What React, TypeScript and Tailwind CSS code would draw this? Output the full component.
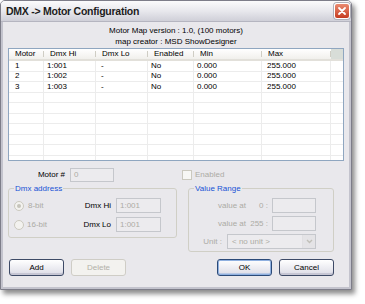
import React from 'react';

const cols = [
  { name: 'Motor', w: 'w-[35px]', pad: 'pl-[6px]' },
  { name: 'Dmx Hi', w: 'w-[52px]', pad: 'pl-[3px]' },
  { name: 'Dmx Lo', w: 'w-[52px]', pad: 'pl-[5px]' },
  { name: 'Enabled', w: 'w-[46px]', pad: 'pl-[3px]' },
  { name: 'Min', w: 'w-[68px]', pad: 'pl-[3px]' },
  { name: 'Max', w: 'w-[69px]', pad: 'pl-[5px]' },
];

const rows = [
  ['1', '1:001', '-', 'No', '0.000', '255.000'],
  ['2', '1:002', '-', 'No', '0.000', '255.000'],
  ['3', '1:003', '-', 'No', '0.000', '255.000'],
  [], [], [], [], [], [], [],
];

function Field({ value = '', w }: { value?: string; w: string }) {
  return (
    <div className={`${w} h-[15px] shrink-0 border border-[#c5c7cc] bg-[#ecebee] flex items-center pl-[3px] text-[#acaba5]`}>
      {value}
    </div>
  );
}

function Btn({ label, kind = 'normal' }: { label: string; kind?: 'normal' | 'default' | 'disabled' }) {
  const cls =
    kind === 'disabled'
      ? 'border-[#cfcdc6] bg-[#f3f2ef] text-[#b2b0a8]'
      : kind === 'default'
      ? 'border-[#2b4a78] bg-gradient-to-b from-white to-[#dcdce6] shadow-[inset_0_0_0_1px_#8fb0e0,inset_0_-2px_0_#b8c8e4] text-black'
      : 'border-[#3d4a66] bg-gradient-to-b from-white to-[#dcdce6] shadow-[inset_0_-2px_0_#c6c6d4] text-black';
  return (
    <div className={`w-[55px] h-[17px] shrink-0 rounded-[3px] border flex items-center justify-center ${cls}`}>{label}</div>
  );
}

export default function App() {
  return (
    <div className="w-[365px] h-[304px] bg-white font-['Liberation_Sans',Arial,sans-serif] text-[8px] leading-none text-black">
      <div className="w-[352px] h-[290px] flex flex-col rounded-t-[5px] border border-[#7d7d89] shadow-[3px_4px_5px_rgba(0,0,0,0.45)] bg-[#e9e8ec] overflow-hidden">
        <div className="h-[21px] shrink-0 flex items-center justify-between pl-[5px] pr-[1px] bg-gradient-to-b from-[#fbfbfc] via-[#e8e8ed] to-[#cfcfd8] border-b border-[#b5b5c0]">
          <span className="text-[10.5px] font-bold tracking-[-0.25px] text-[#1c1c1c]">DMX -&gt; Motor Configuration</span>
          <div className="w-[16px] h-[16px] rounded-[3px] border border-white bg-gradient-to-b from-[#e98a70] to-[#c53a1d] flex items-center justify-center shadow-[0_0_0_1px_#b0b0b8]">
            <svg width="10" height="10" viewBox="0 0 10 10">
              <path d="M2 2 L8 8 M8 2 L2 8" stroke="white" strokeWidth="1.8" strokeLinecap="round" />
            </svg>
          </div>
        </div>

        <div className="flex-1 flex flex-col border-x-2 border-b-2 border-[#c3c3cd] px-[5px]">
          <div className="pt-[3px] text-center leading-[11px]">
            <div>Motor Map version : 1.0, (100 motors)</div>
            <div>map creator : MSD ShowDesigner</div>
          </div>

          <div className="mt-[1px] h-[113px] shrink-0 border border-[#8fa6c0] bg-white overflow-hidden">
            <div className="h-[12px] flex bg-gradient-to-b from-white to-[#f1f0ec] border-b-2 border-[#e2e0da]">
              {cols.map(c => (
                <div key={c.name} className={`${c.w} h-full flex items-center pl-[6px] relative`}>
                  {c.name}
                  <div className="absolute right-0 top-[2px] bottom-[2px] w-px bg-[#cfcdc4]" />
                </div>
              ))}
              <div className="flex-1 bg-[#d8ddd8]" />
            </div>
            {rows.map((r, i) => (
              <div key={i} className="h-[10.56px] flex border-b border-[#ececec]">
                {cols.map((c, j) => (
                  <div key={j} className={`${c.w} h-full flex items-center ${c.pad} border-r border-[#ececec]`}>
                    {r[j] || ''}
                  </div>
                ))}
                <div className="flex-1" />
              </div>
            ))}
          </div>

          <div className="mt-[7px] flex">
            <div className="w-[169px] flex flex-col">
              <div className="h-[14px] flex items-center">
                <div className="w-[57px] text-right">Motor #</div>
                <div className="ml-[5px] w-[44px] h-[14px] border border-[#c5c7cc] bg-[#ecebee] flex items-center pl-[3px] text-[#acaba5]">0</div>
              </div>
              <fieldset className="mt-[2px] h-[54px] rounded-[3px] border border-[#d0cfc6]">
                <legend className="ml-[5px] px-[1px] leading-[9px] text-[#1853d6]">Dmx address</legend>
                <div className="pt-[5px] flex flex-col gap-[4px] pr-[15px]">
                  <div className="h-[15px] flex items-center pl-[5px]">
                    <div className="w-[10px] h-[10px] rounded-full border border-[#cbc9bf] bg-[#f3f2ef] flex items-center justify-center">
                      <div className="w-[4px] h-[4px] rounded-full bg-[#c6c4bb]" />
                    </div>
                    <span className="ml-[4px] text-[#acaba5]">8-bit</span>
                    <span className="flex-1 text-right">Dmx Hi</span>
                    <div className="ml-[5px]"><Field w="w-[45px]" value="1:001" /></div>
                  </div>
                  <div className="h-[15px] flex items-center pl-[5px]">
                    <div className="w-[10px] h-[10px] rounded-full border border-[#cbc9bf] bg-[#f3f2ef]" />
                    <span className="ml-[3px] text-[#acaba5]">16-bit</span>
                    <span className="flex-1 text-right">Dmx Lo</span>
                    <div className="ml-[5px]"><Field w="w-[45px]" value="1:001" /></div>
                  </div>
                </div>
              </fieldset>
            </div>

            <div className="ml-[5px] flex flex-col">
              <div className="h-[14px] flex items-center">
                <div className="w-[10px] h-[10px] border border-[#cbc9bf] bg-[#f7f7f5]" />
                <span className="ml-[3px] text-[#acaba5]">Enabled</span>
              </div>
              <fieldset className="ml-[6px] mt-[2px] w-[146px] h-[68px] rounded-[3px] border border-[#d0cfc6]">
                <legend className="ml-[5px] px-[1px] leading-[9px] text-[#1853d6]">Value Range</legend>
                <div className="pt-[5px] flex flex-col gap-[3px] pr-[17px] text-[#acaba5]">
                  <div className="h-[15px] flex items-center justify-end">
                    <span>value at</span>
                    <span className="w-[22px] text-right">0 :</span>
                    <div className="ml-[4px]"><Field w="w-[44px]" /></div>
                  </div>
                  <div className="h-[15px] flex items-center justify-end">
                    <span>value at</span>
                    <span className="w-[22px] text-right">255 :</span>
                    <div className="ml-[4px]"><Field w="w-[44px]" /></div>
                  </div>
                  <div className="h-[15px] flex items-center justify-end">
                    <span>Unit :</span>
                    <div className="ml-[5px] w-[89px] h-[15px] border border-[#c5c7cc] bg-[#ecebee] flex items-center">
                      <span className="flex-1 pl-[4px]">&lt; no unit &gt;</span>
                      <div className="w-[13px] h-[13px] bg-[#e4e3e6] border-l border-[#e0dfe2] flex items-center justify-center">
                        <svg width="7" height="5" viewBox="0 0 7 5">
                          <path d="M1 1 L3.5 3.5 L6 1" stroke="#c0bfb8" strokeWidth="1.4" fill="none" />
                        </svg>
                      </div>
                    </div>
                  </div>
                </div>
              </fieldset>
            </div>
          </div>

          <div className="mt-[7px] flex items-center pl-[1px] pr-[10px]">
            <Btn label="Add" />
            <div className="ml-[7px]"><Btn label="Delete" kind="disabled" /></div>
            <div className="flex-1" />
            <Btn label="OK" kind="default" />
            <div className="ml-[7px]"><Btn label="Cancel" /></div>
          </div>
        </div>
      </div>
    </div>
  );
}
